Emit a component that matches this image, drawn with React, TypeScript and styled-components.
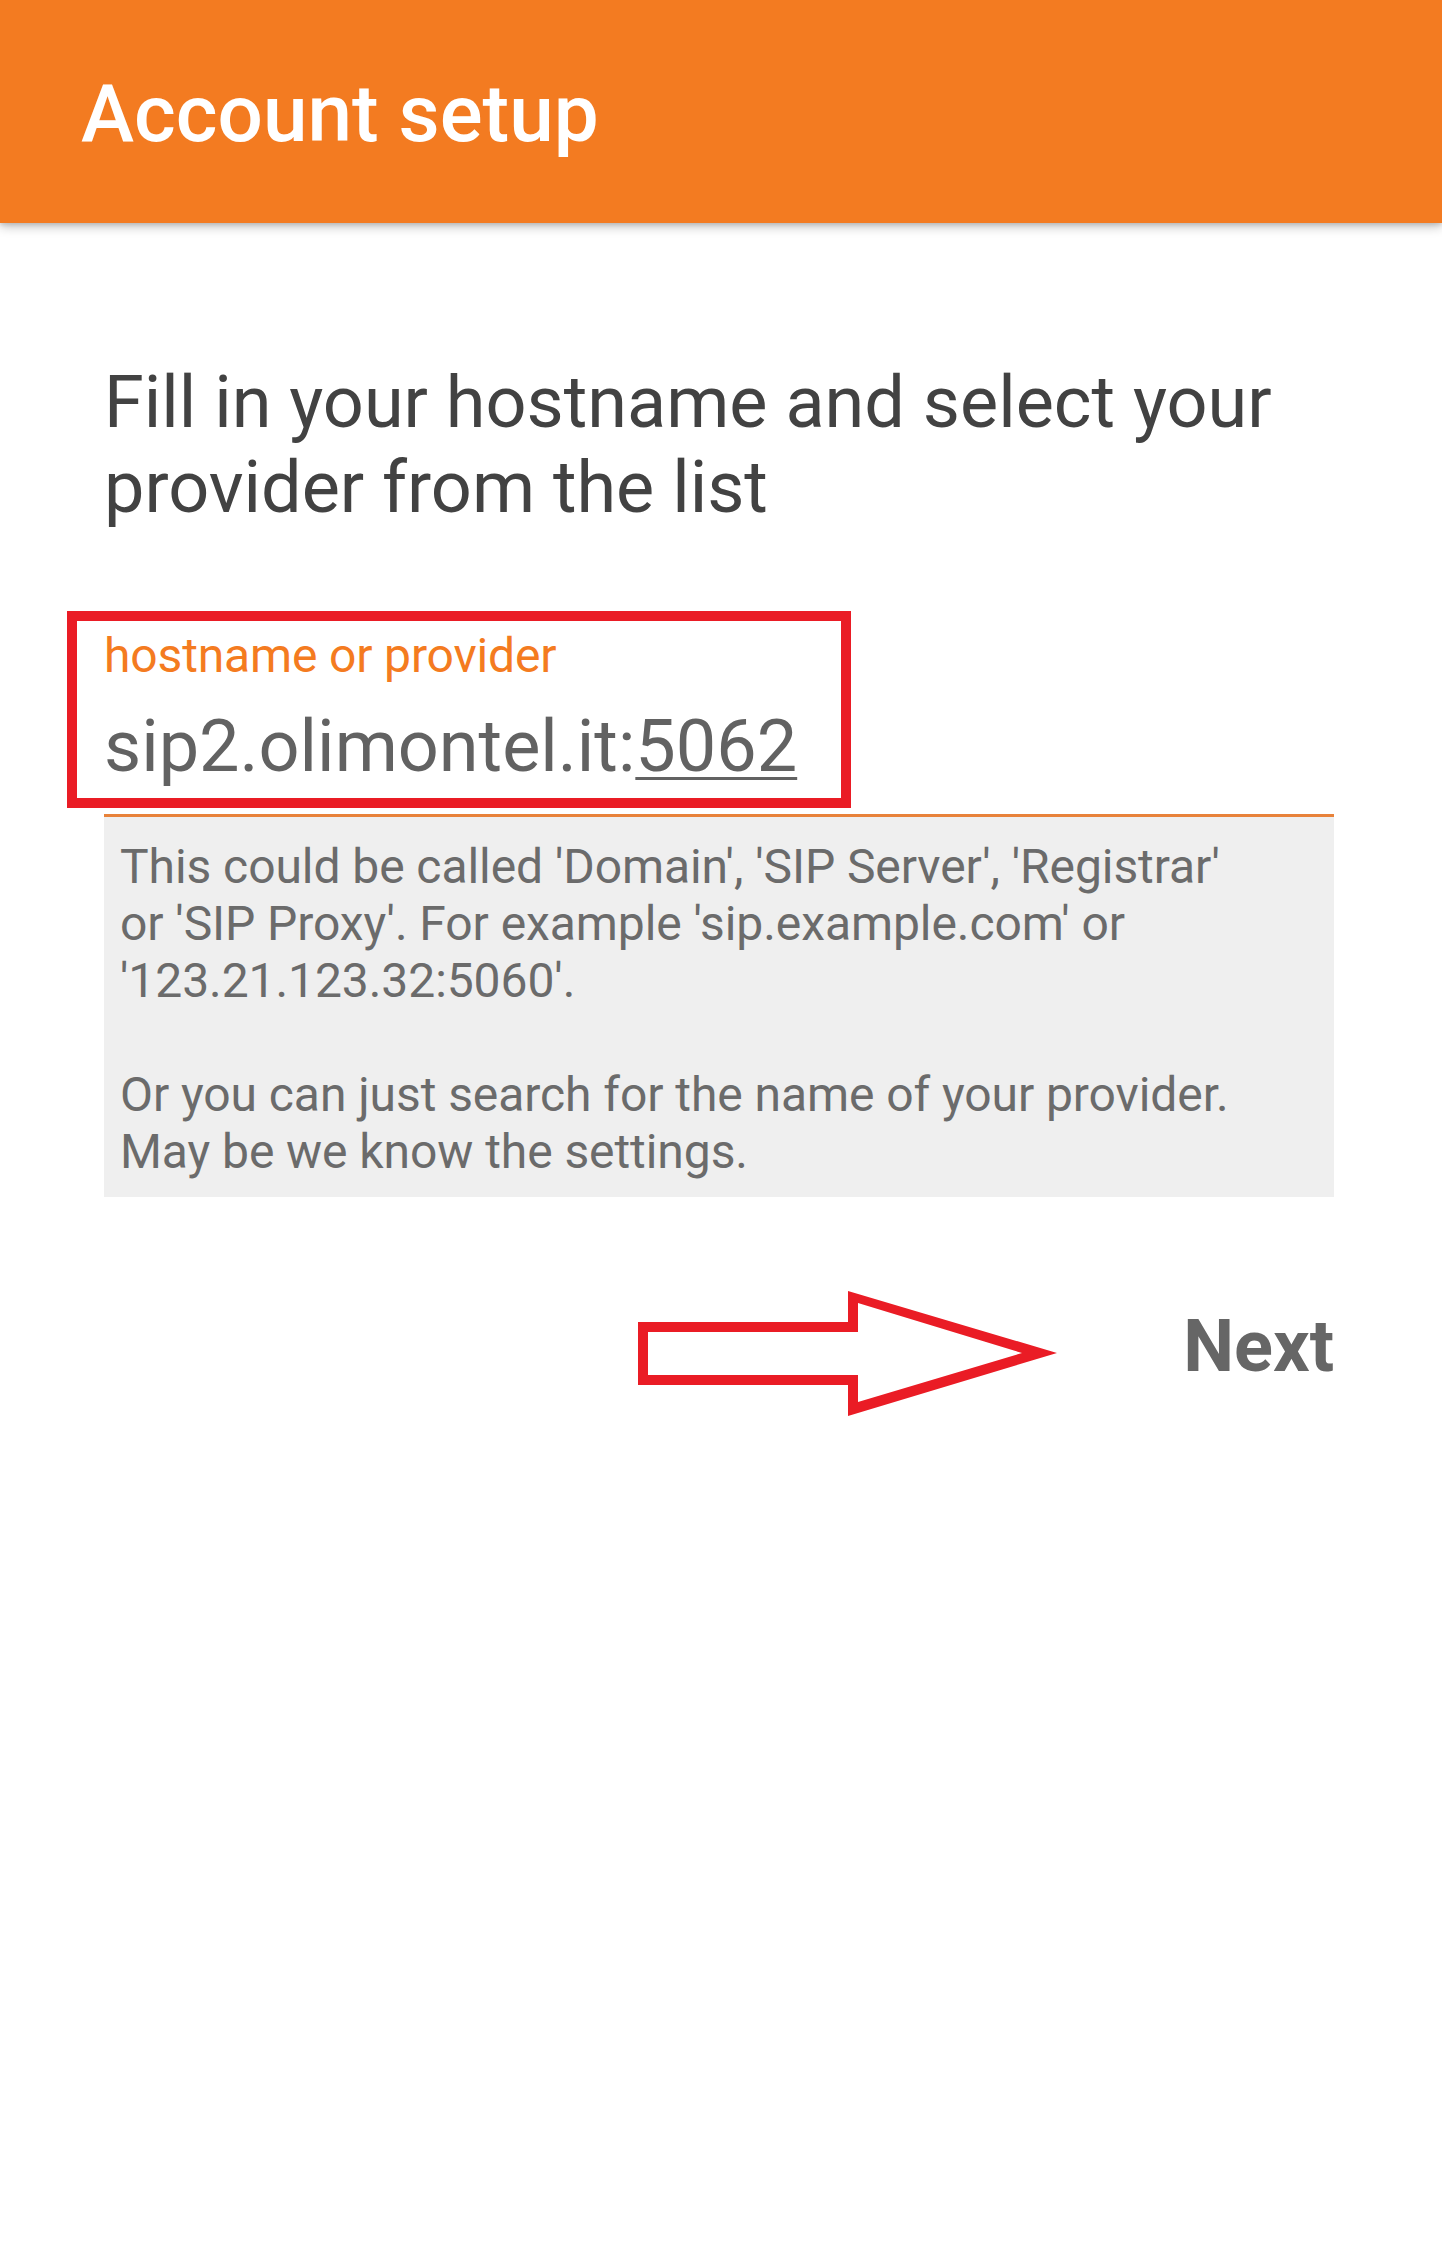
import React from "react";
import styled, { createGlobalStyle } from "styled-components";

const GlobalStyle = createGlobalStyle`
  html, body {
    margin: 0;
    padding: 0;
    background: #ffffff;
  }
  body {
    font-family: Roboto, "Noto Sans", "Liberation Sans", sans-serif;
    -webkit-font-smoothing: antialiased;
  }
  * { box-sizing: border-box; }
`;

const Page = styled.div`
  position: relative;
  width: 1442px;
  min-height: 2258px;
  background: #ffffff;
  overflow: hidden;
`;

const Toolbar = styled.header`
  position: relative;
  z-index: 2;
  height: 223px;
  display: flex;
  align-items: center;
  padding: 4px 0 0 81px;
  background: #f37b21;
  box-shadow: 0 4px 10px rgba(0, 0, 0, 0.22), 0 2px 4px rgba(0, 0, 0, 0.12);
`;

const Title = styled.h1`
  margin: 0;
  font-size: 80px;
  font-weight: 500;
  line-height: normal;
  color: #ffffff;
`;

const Content = styled.main`
  display: flex;
  flex-direction: column;
  padding: 138px 108px 0 104px;
`;

const Heading = styled.h2`
  margin: 0;
  font-size: 72px;
  font-weight: 400;
  line-height: 84.5px;
  color: #424242;
`;

const Field = styled.div`
  display: flex;
  flex-direction: column;
  margin-top: 98px;
`;

const FieldLabel = styled.label`
  font-size: 48px;
  line-height: 56px;
  letter-spacing: -0.15px;
  color: #f47b20;
`;

const FieldValue = styled.div`
  margin-top: 21px;
  font-size: 72px;
  line-height: 84.5px;
  color: #626262;
  white-space: nowrap;
`;

const Composing = styled.span`
  text-decoration: underline;
  text-decoration-thickness: 3px;
  text-underline-offset: 6px;
`;

const FieldLine = styled.div`
  margin-top: 24px;
  height: 3px;
  background: #e8823a;
`;

const HelpBox = styled.div`
  padding: 21px 16px 17px 16px;
  background: #efefef;
  font-size: 48px;
  line-height: 57px;
  letter-spacing: -0.07px;
  color: #6b6b6b;
  white-space: nowrap;
`;

const Actions = styled.div`
  display: flex;
  justify-content: flex-end;
  margin-top: 108px;
`;

const NextButton = styled.button`
  margin: 0;
  padding: 0;
  border: none;
  background: transparent;
  font-family: Roboto, "Liberation Sans", sans-serif;
  font-size: 72px;
  font-weight: 700;
  line-height: 84.5px;
  color: #666666;
  cursor: pointer;
`;

const HighlightBox = styled.div`
  position: absolute;
  left: 67px;
  top: 611px;
  width: 784px;
  height: 197px;
  border: 10px solid #ea1c25;
  pointer-events: none;
`;

const ArrowMark = styled.svg`
  position: absolute;
  left: 638px;
  top: 1291px;
  width: 420px;
  height: 126px;
  pointer-events: none;
`;

export default function App() {
  return (
    <>
      <GlobalStyle />
      <Page>
        <Toolbar>
          <Title>Account setup</Title>
        </Toolbar>
        <Content>
          <Heading>Fill in your hostname and select your provider from the list</Heading>
          <Field>
            <FieldLabel>hostname or provider</FieldLabel>
            <FieldValue>
              sip2.olimontel.it:<Composing>5062</Composing>
            </FieldValue>
            <FieldLine />
          </Field>
          <HelpBox>
            This could be called 'Domain', 'SIP Server', 'Registrar'
            <br />
            or 'SIP Proxy'. For example 'sip.example.com' or
            <br />
            '123.21.123.32:5060'.
            <br />
            <br />
            Or you can just search for the name of your provider.
            <br />
            May be we know the settings.
          </HelpBox>
          <Actions>
            <NextButton>Next</NextButton>
          </Actions>
        </Content>
        <HighlightBox />
        <ArrowMark viewBox="0 0 420 126">
          <path
            fillRule="evenodd"
            fill="#ea1c25"
            d="M0 31 L210 31 L210 0 L419 62 L210 125 L210 94 L0 94 Z M10 41 L10 84 L220 84 L220 111 L384 62 L220 12 L220 41 Z"
          />
        </ArrowMark>
      </Page>
    </>
  );
}
